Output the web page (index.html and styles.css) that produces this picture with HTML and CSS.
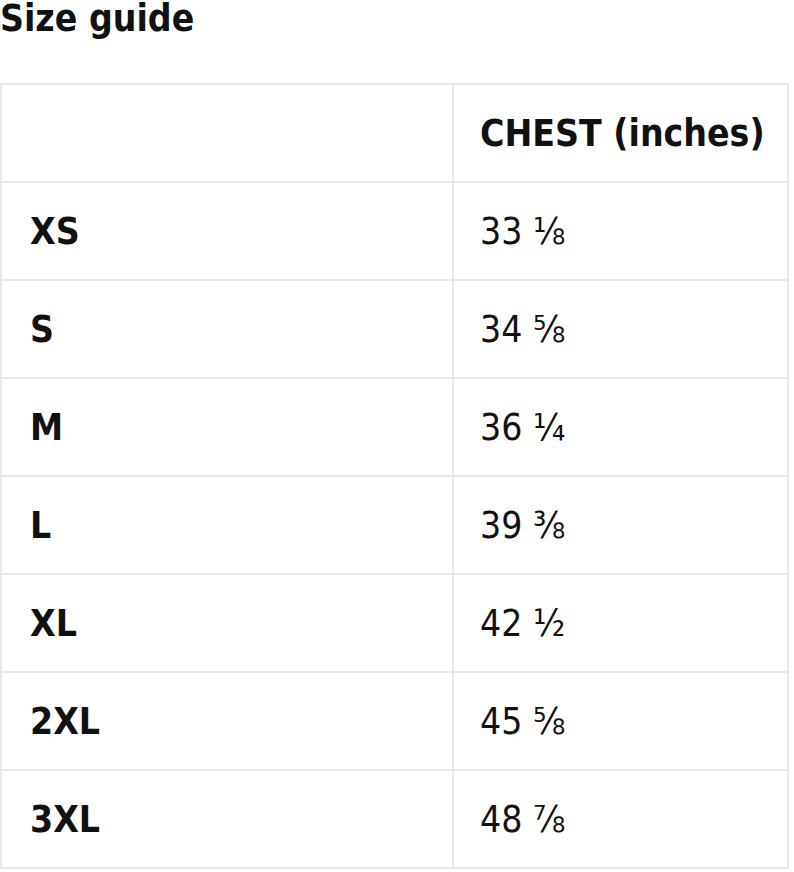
FILE: index.html
```html
<!DOCTYPE html>
<html>
<head>
<meta charset="utf-8">
<link rel="stylesheet" href="styles.css">
</head>
<body>
<h2 class="title">Size guide</h2>
<table class="sizes">
  <thead>
    <tr><th class="label"></th><th class="head">CHEST (inches)</th></tr>
  </thead>
  <tbody>
    <tr><th class="label">XS</th><td>33 ⅛</td></tr>
    <tr><th class="label">S</th><td>34 ⅝</td></tr>
    <tr><th class="label">M</th><td>36 ¼</td></tr>
    <tr><th class="label">L</th><td>39 ⅜</td></tr>
    <tr><th class="label">XL</th><td>42 ½</td></tr>
    <tr><th class="label">2XL</th><td>45 ⅝</td></tr>
    <tr><th class="label">3XL</th><td>48 ⅞</td></tr>
  </tbody>
</table>
</body>
</html>
```
FILE: styles.css
```css
html, body {
  margin: 0;
  padding: 0;
  background: #fff;
}
body {
  font-family: "DejaVu Sans Condensed", "DejaVu Sans", sans-serif;
  font-stretch: condensed;
  color: #111;
  font-size: 37px;
}
.title {
  margin: 0;
  padding-top: 0;
  font-size: 37px;
  font-weight: bold;
  line-height: 38px;
  height: 83px;
}
.sizes {
  border-collapse: collapse;
  width: 789px;
}
.sizes th, .sizes td {
  border: 2px solid #e8e8e8;
  height: 98px;
  padding: 0 0 0 28px;
  text-align: left;
  vertical-align: middle;
  box-sizing: border-box;
}
.sizes th.label {
  width: 452px;
  font-weight: bold;
}
.sizes th.head,
.sizes td {
  padding-left: 26px;
}
.sizes th.head {
  font-weight: bold;
}
.sizes td {
  font-weight: normal;
}
```
